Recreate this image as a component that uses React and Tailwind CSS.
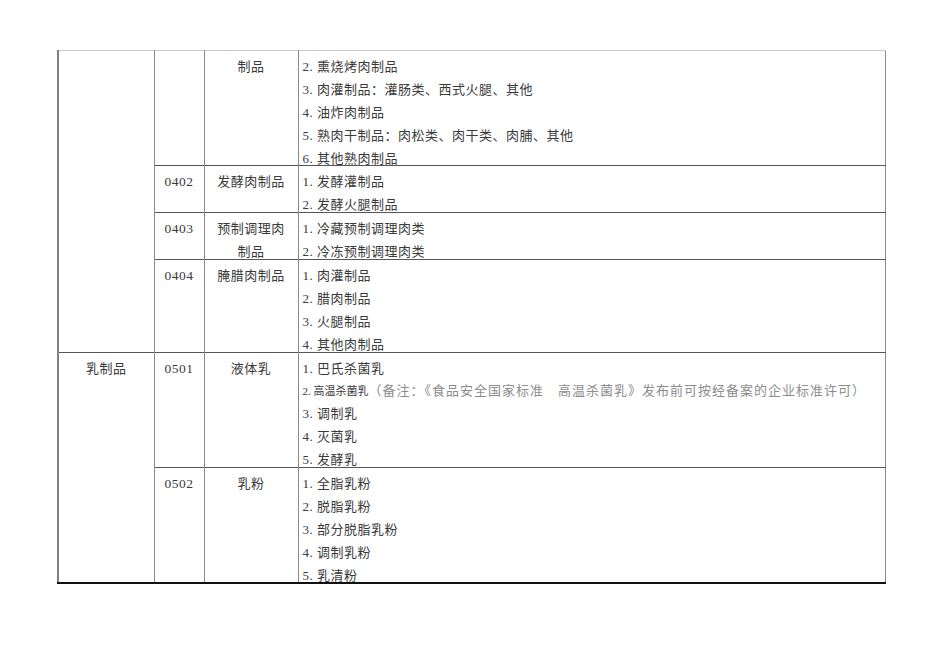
import React from 'react';

// 食品生产许可分类目录（节选）
const groups = [
    {
        category: '',
        rows: [
            {
                code: '',
                name: ['制品'],
                items: [
                    '2. 熏烧烤肉制品',
                    '3. 肉灌制品：灌肠类、西式火腿、其他',
                    '4. 油炸肉制品',
                    '5. 熟肉干制品：肉松类、肉干类、肉脯、其他',
                    '6. 其他熟肉制品',
                ],
            },
            { code: '0402', name: ['发酵肉制品'], items: ['1. 发酵灌制品', '2. 发酵火腿制品'] },
            { code: '0403', name: ['预制调理肉', '制品'], items: ['1. 冷藏预制调理肉类', '2. 冷冻预制调理肉类'] },
            { code: '0404', name: ['腌腊肉制品'], items: ['1. 肉灌制品', '2. 腊肉制品', '3. 火腿制品', '4. 其他肉制品'] },
        ],
    },
    {
        category: '乳制品',
        rows: [
            {
                code: '0501',
                name: ['液体乳'],
                items: ['1. 巴氏杀菌乳', 'note', '3. 调制乳', '4. 灭菌乳', '5. 发酵乳'],
            },
            {
                code: '0502',
                name: ['乳粉'],
                items: ['1. 全脂乳粉', '2. 脱脂乳粉', '3. 部分脱脂乳粉', '4. 调制乳粉', '5. 乳清粉'],
            },
        ],
    },
];

const Lines = ({ lines }) => (
    <div className="pt-[5px] -mb-[5px]">
        {lines.map((line, i) => (
            <div key={i} className="leading-[22.9px] h-[22.9px] whitespace-nowrap">
                {line === 'note' ? (
                    <>
                        <span className="text-[11px] tracking-normal">2. 高温杀菌乳</span>
                        <span className="text-[#8c8c8c] tracking-[1px]">（备注：《食品安全国家标准　高温杀菌乳》发布前可按经备案的企业标准许可）</span>
                    </>
                ) : (
                    line
                )}
            </div>
        ))}
    </div>
);

const App = () => {
    return (
        <div
            className="min-h-screen bg-white pl-[57px] pt-[50px] text-[13px] tracking-[0.5px] text-[#3a3a3a]"
            style={{ fontFamily: '"Liberation Serif", "Noto Sans CJK SC", serif' }}
        >
            <table className="table-fixed border-collapse w-[827px] border-t border-t-[#c8c8c8] border-l-2 border-l-[#808080] border-r border-r-[#8a8a8a] border-b-2 border-b-[#111]">
                <colgroup>
                    <col className="w-[96px]" />
                    <col className="w-[50px]" />
                    <col className="w-[94px]" />
                    <col className="w-[587px]" />
                </colgroup>
                <tbody>
                    {groups.map((group, gi) =>
                        group.rows.map((row, ri) => {
                            const top = gi === 0 && ri === 0 ? 'border-t-[#c8c8c8]' : 'border-t-[#555]';
                            return (
                                <tr key={`${gi}-${ri}`}>
                                    {ri === 0 && (
                                        <td
                                            rowSpan={group.rows.length}
                                            className={`align-top p-0 text-center border-r border-r-[#8a8a8a] border-t ${top}`}
                                        >
                                            {group.category && <Lines lines={[group.category]} />}
                                        </td>
                                    )}
                                    <td className={`align-top p-0 text-center text-[13.5px] border-r border-r-[#8a8a8a] border-t ${top}`}>
                                        {row.code && <Lines lines={[row.code]} />}
                                    </td>
                                    <td className={`align-top p-0 px-[10px] text-center border-r border-r-[#8a8a8a] border-t ${top}`}>
                                        <Lines lines={row.name} />
                                    </td>
                                    <td className={`align-top p-0 pl-[4px] border-t ${top}`}>
                                        <Lines lines={row.items} />
                                    </td>
                                </tr>
                            );
                        })
                    )}
                </tbody>
            </table>
        </div>
    );
};

export default App;
